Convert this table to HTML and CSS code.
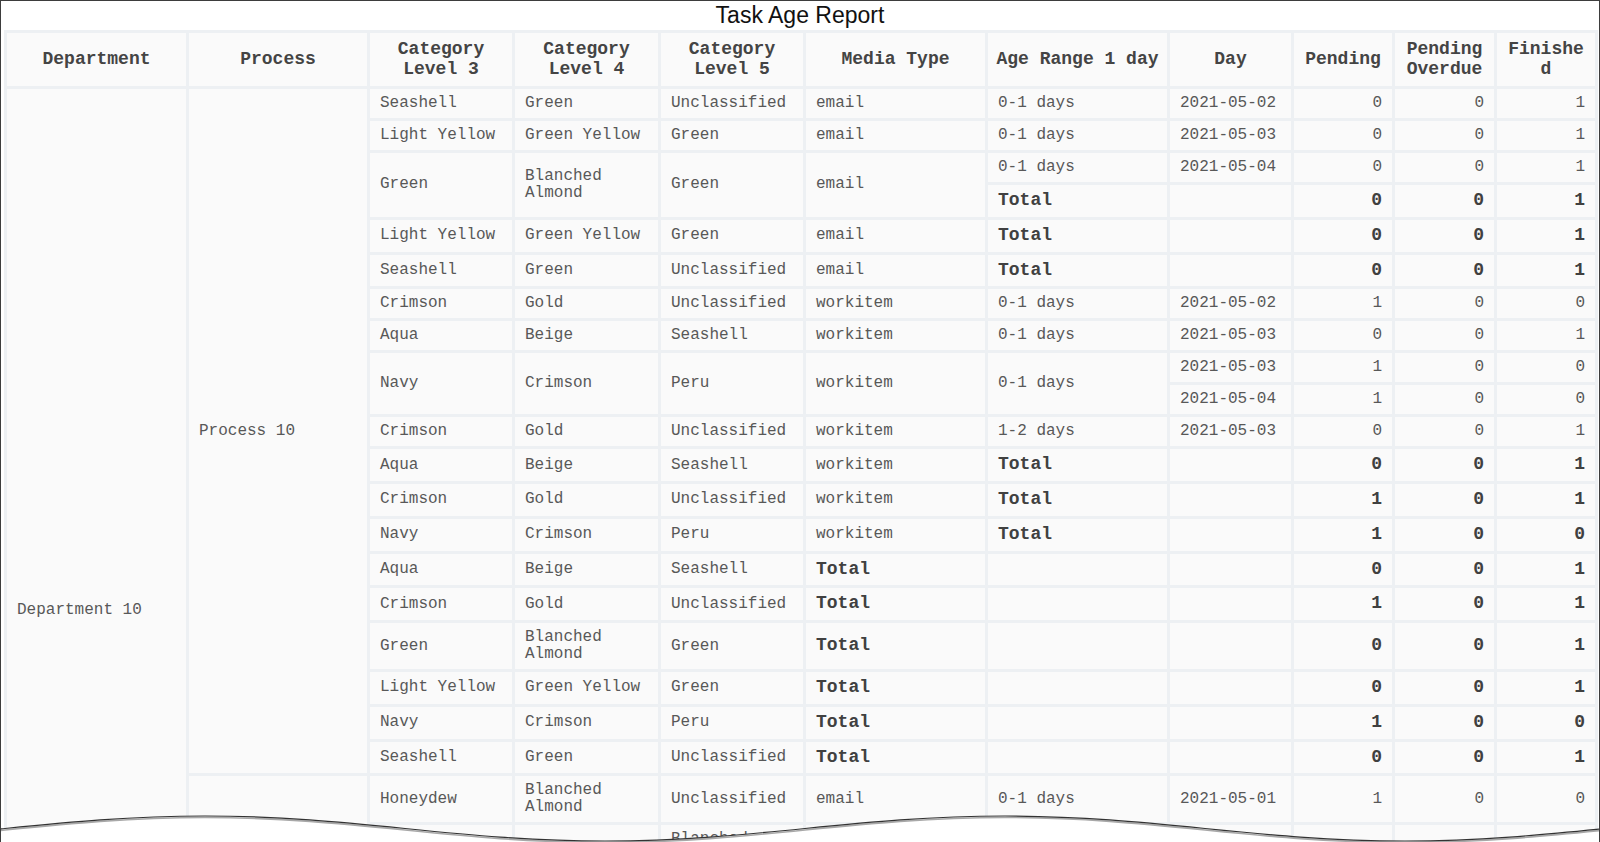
FILE: index.html
```html
<!DOCTYPE html>
<html lang="en">
<head>
<meta charset="utf-8">
<title>Task Age Report</title>
<link rel="stylesheet" href="styles.css">
</head>
<body>
<div class="frame">
  <h1 class="title">Task Age Report</h1>
  <table class="report">
    <colgroup>
      <col class="w-dept"><col class="w-proc"><col class="w-cat"><col class="w-cat4"><col class="w-cat5">
      <col class="w-media"><col class="w-age"><col class="w-day"><col class="w-num"><col class="w-num2"><col class="w-num">
    </colgroup>
    <thead>
      <tr>
        <th>Department</th><th>Process</th><th>Category Level 3</th><th>Category Level 4</th><th>Category Level 5</th>
        <th>Media Type</th><th>Age Range 1 day</th><th>Day</th><th>Pending</th><th>Pending Overdue</th><th class="brk">Finished</th>
      </tr>
    </thead>
    <tbody>
      <tr>
        <td rowspan="30">Department 10</td>
        <td rowspan="20">Process 10</td>
        <td>Seashell</td><td>Green</td><td>Unclassified</td><td>email</td><td>0-1 days</td><td>2021-05-02</td><td class="num">0</td><td class="num">0</td><td class="num">1</td>
      </tr>
      <tr>
        <td>Light Yellow</td><td>Green Yellow</td><td>Green</td><td>email</td><td>0-1 days</td><td>2021-05-03</td><td class="num">0</td><td class="num">0</td><td class="num">1</td>
      </tr>
      <tr>
        <td rowspan="2">Green</td><td rowspan="2">Blanched Almond</td><td rowspan="2">Green</td><td rowspan="2">email</td><td>0-1 days</td><td>2021-05-04</td><td class="num">0</td><td class="num">0</td><td class="num">1</td>
      </tr>
      <tr>
        <td class="tot">Total</td><td></td><td class="num tot">0</td><td class="num tot">0</td><td class="num tot">1</td>
      </tr>
      <tr>
        <td>Light Yellow</td><td>Green Yellow</td><td>Green</td><td>email</td><td class="tot">Total</td><td></td><td class="num tot">0</td><td class="num tot">0</td><td class="num tot">1</td>
      </tr>
      <tr>
        <td>Seashell</td><td>Green</td><td>Unclassified</td><td>email</td><td class="tot">Total</td><td></td><td class="num tot">0</td><td class="num tot">0</td><td class="num tot">1</td>
      </tr>
      <tr>
        <td>Crimson</td><td>Gold</td><td>Unclassified</td><td>workitem</td><td>0-1 days</td><td>2021-05-02</td><td class="num">1</td><td class="num">0</td><td class="num">0</td>
      </tr>
      <tr>
        <td>Aqua</td><td>Beige</td><td>Seashell</td><td>workitem</td><td>0-1 days</td><td>2021-05-03</td><td class="num">0</td><td class="num">0</td><td class="num">1</td>
      </tr>
      <tr>
        <td rowspan="2">Navy</td><td rowspan="2">Crimson</td><td rowspan="2">Peru</td><td rowspan="2">workitem</td><td rowspan="2">0-1 days</td><td>2021-05-03</td><td class="num">1</td><td class="num">0</td><td class="num">0</td>
      </tr>
      <tr>
        <td>2021-05-04</td><td class="num">1</td><td class="num">0</td><td class="num">0</td>
      </tr>
      <tr>
        <td>Crimson</td><td>Gold</td><td>Unclassified</td><td>workitem</td><td>1-2 days</td><td>2021-05-03</td><td class="num">0</td><td class="num">0</td><td class="num">1</td>
      </tr>
      <tr>
        <td>Aqua</td><td>Beige</td><td>Seashell</td><td>workitem</td><td class="tot">Total</td><td></td><td class="num tot">0</td><td class="num tot">0</td><td class="num tot">1</td>
      </tr>
      <tr>
        <td>Crimson</td><td>Gold</td><td>Unclassified</td><td>workitem</td><td class="tot">Total</td><td></td><td class="num tot">1</td><td class="num tot">0</td><td class="num tot">1</td>
      </tr>
      <tr>
        <td>Navy</td><td>Crimson</td><td>Peru</td><td>workitem</td><td class="tot">Total</td><td></td><td class="num tot">1</td><td class="num tot">0</td><td class="num tot">0</td>
      </tr>
      <tr>
        <td>Aqua</td><td>Beige</td><td>Seashell</td><td class="tot">Total</td><td></td><td></td><td class="num tot">0</td><td class="num tot">0</td><td class="num tot">1</td>
      </tr>
      <tr>
        <td>Crimson</td><td>Gold</td><td>Unclassified</td><td class="tot">Total</td><td></td><td></td><td class="num tot">1</td><td class="num tot">0</td><td class="num tot">1</td>
      </tr>
      <tr>
        <td>Green</td><td>Blanched Almond</td><td>Green</td><td class="tot">Total</td><td></td><td></td><td class="num tot">0</td><td class="num tot">0</td><td class="num tot">1</td>
      </tr>
      <tr>
        <td>Light Yellow</td><td>Green Yellow</td><td>Green</td><td class="tot">Total</td><td></td><td></td><td class="num tot">0</td><td class="num tot">0</td><td class="num tot">1</td>
      </tr>
      <tr>
        <td>Navy</td><td>Crimson</td><td>Peru</td><td class="tot">Total</td><td></td><td></td><td class="num tot">1</td><td class="num tot">0</td><td class="num tot">0</td>
      </tr>
      <tr>
        <td>Seashell</td><td>Green</td><td>Unclassified</td><td class="tot">Total</td><td></td><td></td><td class="num tot">0</td><td class="num tot">0</td><td class="num tot">1</td>
      </tr>
      <tr>
        <td rowspan="10">Process 11</td>
        <td>Honeydew</td><td>Blanched Almond</td><td>Unclassified</td><td>email</td><td>0-1 days</td><td>2021-05-01</td><td class="num">1</td><td class="num">0</td><td class="num">0</td>
      </tr>
      <tr>
        <td>Honeydew</td><td>Green</td><td>Blanched Almond</td><td>email</td><td>0-1 days</td><td>2021-05-02</td><td class="num">0</td><td class="num">0</td><td class="num">1</td>
      </tr>
      <tr>
        <td>Aqua</td><td>Beige</td><td>Seashell</td><td>email</td><td>0-1 days</td><td>2021-05-02</td><td class="num">1</td><td class="num">0</td><td class="num">0</td>
      </tr>
      <tr>
        <td>Navy</td><td>Gold</td><td>Peru</td><td>workitem</td><td>0-1 days</td><td>2021-05-03</td><td class="num">0</td><td class="num">0</td><td class="num">1</td>
      </tr>
      <tr>
        <td>Crimson</td><td>Gold</td><td>Unclassified</td><td>workitem</td><td>0-1 days</td><td>2021-05-04</td><td class="num">1</td><td class="num">0</td><td class="num">0</td>
      </tr>
      <tr>
        <td>Aqua</td><td>Beige</td><td>Seashell</td><td>workitem</td><td>1-2 days</td><td>2021-05-04</td><td class="num">0</td><td class="num">0</td><td class="num">1</td>
      </tr>
      <tr>
        <td>Seashell</td><td>Green</td><td>Unclassified</td><td>workitem</td><td>0-1 days</td><td>2021-05-05</td><td class="num">1</td><td class="num">0</td><td class="num">0</td>
      </tr>
      <tr>
        <td>Light Yellow</td><td>Green Yellow</td><td>Green</td><td>workitem</td><td>0-1 days</td><td>2021-05-05</td><td class="num">0</td><td class="num">0</td><td class="num">1</td>
      </tr>
      <tr>
        <td>Navy</td><td>Crimson</td><td>Peru</td><td>workitem</td><td class="tot">Total</td><td></td><td class="num tot">1</td><td class="num tot">0</td><td class="num tot">0</td>
      </tr>
      <tr>
        <td>Navy</td><td>Crimson</td><td>Peru</td><td class="tot">Total</td><td></td><td></td><td class="num tot">1</td><td class="num tot">0</td><td class="num tot">0</td>
      </tr>
    </tbody>
  </table>
  <svg class="tear" viewBox="0 0 1600 40" width="1600" height="40" aria-hidden="true">
    <path d="M-195,39 C-45,39 55,14 205,14 C355,14 455,39 605,39 C755,39 855,14 1005,14 C1155,14 1255,39 1405,39 C1555,39 1655,14 1805,14 L1805,60 L-195,60 Z" fill="#ffffff"/>
    <path d="M-195,40.5 C-45,40.5 55,15.5 205,15.5 C355,15.5 455,40.5 605,40.5 C755,40.5 855,15.5 1005,15.5 C1155,15.5 1255,40.5 1405,40.5 C1555,40.5 1655,15.5 1805,15.5" fill="none" stroke="#a8a8a8" stroke-width="1.6"/>
    <path d="M-195,39 C-45,39 55,14 205,14 C355,14 455,39 605,39 C755,39 855,14 1005,14 C1155,14 1255,39 1405,39 C1555,39 1655,14 1805,14" fill="none" stroke="#333333" stroke-width="1.2"/>
  </svg>
</div>
</body>
</html>
```

FILE: styles.css
```css
html, body {
  margin: 0;
  padding: 0;
  overflow: hidden;
  background: #ffffff;
}

.frame {
  position: relative;
  box-sizing: border-box;
  width: 1600px;
  height: 842px;
  border: 1px solid #3d3d3d;
  border-bottom: none;
  overflow: hidden;
  background: #ffffff;
}

.title {
  margin: 0 0 2px 0;
  padding-top: 1px;
  height: 26px;
  line-height: 26px;
  text-align: center;
  font-family: "Liberation Sans", Arial, sans-serif;
  font-size: 23px;
  font-weight: normal;
  color: #111111;
}

.report {
  margin-left: 3px;
  width: 1594px;
  table-layout: fixed;
  border-collapse: separate;
  border-spacing: 3px;
  background: #edf0f3;
  font-family: "Courier New", "Liberation Mono", monospace;
}

.w-dept { width: 179px; }
.w-proc { width: 178px; }
.w-cat { width: 142px; }
.w-cat4 { width: 143px; }
.w-cat5 { width: 142px; }
.w-media { width: 179px; }
.w-age { width: 179px; }
.w-day { width: 121px; }
.w-num { width: 98px; }
.w-num2 { width: 99px; }

.report th {
  background: #fafafa;
  padding: 7px 6px;
  font-size: 18px;
  line-height: 19.5px;
  font-weight: bold;
  color: #444444;
  text-align: center;
  vertical-align: middle;
}

.report th.brk {
  padding: 7px 10px;
  word-break: break-all;
}

.report td {
  background: #fafafa;
  padding: 6px 10px;
  font-size: 16px;
  line-height: 17px;
  color: #585858;
  text-align: left;
  vertical-align: middle;
}

.report td.num {
  text-align: right;
}

.report td.tot {
  font-size: 18px;
  line-height: 19.75px;
  font-weight: bold;
  color: #404040;
}

.tear {
  position: absolute;
  left: -1px;
  bottom: 0;
  display: block;
}
```
